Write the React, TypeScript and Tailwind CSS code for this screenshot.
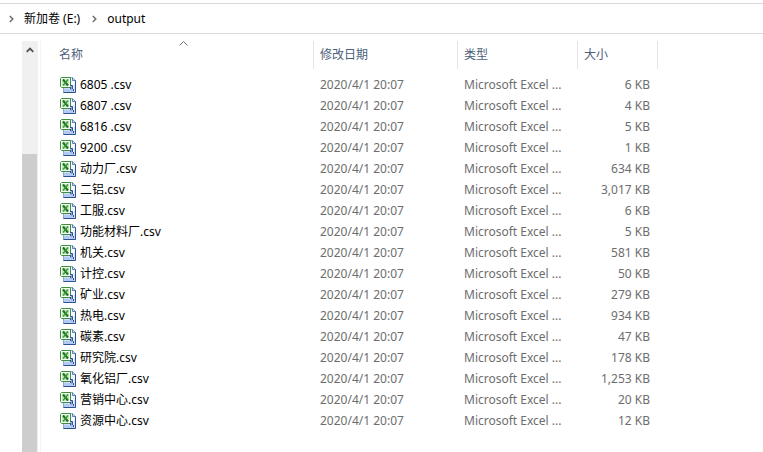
type FileRow = { name: string; size: string };

const MODIFIED = "2020/4/1 20:07";
const FILE_TYPE = "Microsoft Excel ...";

const FILES: FileRow[] = [
  { name: "6805 .csv", size: "6 KB" },
  { name: "6807 .csv", size: "4 KB" },
  { name: "6816 .csv", size: "5 KB" },
  { name: "9200 .csv", size: "1 KB" },
  { name: "动力厂.csv", size: "634 KB" },
  { name: "二铝.csv", size: "3,017 KB" },
  { name: "工服.csv", size: "6 KB" },
  { name: "功能材料厂.csv", size: "5 KB" },
  { name: "机关.csv", size: "581 KB" },
  { name: "计控.csv", size: "50 KB" },
  { name: "矿业.csv", size: "279 KB" },
  { name: "热电.csv", size: "934 KB" },
  { name: "碳素.csv", size: "47 KB" },
  { name: "研究院.csv", size: "178 KB" },
  { name: "氧化铝厂.csv", size: "1,253 KB" },
  { name: "营销中心.csv", size: "20 KB" },
  { name: "资源中心.csv", size: "12 KB" },
];

function Chevron() {
  return (
    <svg width="5" height="8" viewBox="0 0 5 8" fill="none" aria-hidden="true">
      <path d="M.8 1 3.8 4 .8 7" stroke="#6e6e6e" strokeWidth="1.5" />
    </svg>
  );
}

function CsvIcon() {
  return (
    <svg width="16" height="16" viewBox="0 0 16 16" className="shrink-0" aria-hidden="true">
      {/* Page */}
      <path d="M3.5.5h9l3 3v12h-12z" fill="#cfdefa" stroke="#8ba6d8" />
      <path d="M11 1h1.500v3H15v4h-4z" fill="#f4f8ff" />
      <path d="M12.5.5v3h3" fill="none" stroke="#5f7fb8" />
      <path d="M15.5 3.5v12h-12" fill="none" stroke="#2f5190" />
      <path d="M4 12h10v3H4z" fill="#b3caf5" />
      {/* Excel badge */}
      <path d="M1.5.5h9v10h-9l-1-1v-8z" fill="#f6fcf4" stroke="#3a9139" />
      <path d="M2 2h7v7H2z" fill="#c6e6c0" />
      <path d="m3 2.5 5 6" stroke="#1d7522" strokeWidth="2" />
      <path d="m8 2.5-5 6" stroke="#3d9a3d" strokeWidth="1.4" />
      {/* Letter and comma */}
      <path d="M10 8h4v5h-4z" fill="#f1f6ff" />
      <path d="M10 8.5h2.5V12h-2v-2h2" fill="none" stroke="#2d5199" />
      <path d="M13.5 12v2" stroke="#2d5199" />
    </svg>
  );
}

function Breadcrumb() {
  return (
    <nav
      aria-label="Path"
      className="mt-[3px] flex h-[31px] items-center border-y border-[#d9d9d9] pl-[9px]"
    >
      <Chevron />
      <a href="#drive" className="mr-3 ml-[10px]">
        新加卷 (E:)
      </a>
      <Chevron />
      <a href="#output" className="ml-[10px]">
        output
      </a>
    </nav>
  );
}

function Scrollbar() {
  return (
    <div className="ml-[22px] flex w-4 shrink-0 flex-col bg-[#f0f0f0]">
      <button type="button" aria-label="Scroll up" className="flex h-[17px] items-center justify-center">
        <svg width="8" height="6" viewBox="0 0 8 6" fill="none" aria-hidden="true">
          <path d="M.7 4.8 4 1.5l3.3 3.3" stroke="#505050" strokeWidth="1.8" />
        </svg>
      </button>
      <div className="mt-24 mr-px flex-1 bg-[#cdcdcd]" />
    </div>
  );
}

function FileTable() {
  return (
    <table className="w-full table-fixed border-separate border-spacing-0">
      <colgroup>
        <col className="w-[273px]" />
        <col className="w-36" />
        <col className="w-30" />
        <col className="w-20" />
        <col />
      </colgroup>
      <thead>
        <tr className="h-7 text-left text-[#4c607a]">
          <th scope="col" className="relative border-r border-[#e5e5e5] pl-[18px] font-normal">
            <button type="button">名称</button>
            <svg
              className="absolute top-0 left-[138px]"
              width="9"
              height="6"
              viewBox="0 0 9 6"
              fill="none"
              aria-hidden="true"
            >
              <path d="m.5 4.5 4-4 4 4" stroke="#737373" />
            </svg>
          </th>
          <th scope="col" className="border-r border-[#e5e5e5] pl-1.5 font-normal">
            <button type="button">修改日期</button>
          </th>
          <th scope="col" className="border-r border-[#e5e5e5] pl-1.5 font-normal">
            <button type="button">类型</button>
          </th>
          <th scope="col" className="border-r border-[#e5e5e5] pl-1.5 font-normal">
            <button type="button">大小</button>
          </th>
          <td />
        </tr>
      </thead>
      <tbody className="before:block before:h-[5px]">
        {FILES.map((file) => (
          <tr key={file.name} className="h-[21px] whitespace-nowrap text-[#6d6d6d]">
            <td className="pl-[19px] text-black">
              <div className="flex items-center gap-1">
                <CsvIcon />
                {file.name}
              </div>
            </td>
            <td className="pl-1.5">{MODIFIED}</td>
            <td className="pl-1.5">{FILE_TYPE}</td>
            <td className="pr-2 text-right">{file.size}</td>
            <td />
          </tr>
        ))}
      </tbody>
    </table>
  );
}

export default function App() {
  return (
    <div className="flex min-h-screen flex-col bg-white font-['Noto_Sans','Noto_Sans_CJK_SC',sans-serif] text-[12px] leading-4 text-black">
      <Breadcrumb />
      <main className="flex flex-1 pt-[7px]">
        <Scrollbar />
        <div className="ml-0.5 flex-1 border-l border-[#f3f3f3]">
          <FileTable />
        </div>
      </main>
    </div>
  );
}
